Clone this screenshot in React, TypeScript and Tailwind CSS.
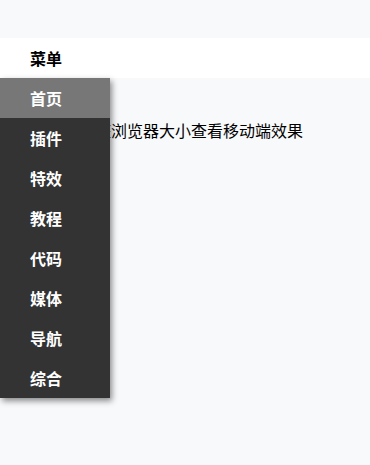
const items = ["首页", "插件", "特效", "教程", "代码", "媒体", "导航", "综合"];

export default function App() {
  return (
    <div
      className="relative min-h-[465px] bg-[#f8f9fb] pt-[38px] text-black"
      style={{ fontFamily: '"Noto Sans CJK SC", "Noto Sans", sans-serif' }}
    >
      {/* top bar */}
      <div className="relative h-10 bg-white">
        <div className="flex h-10 items-center px-[30px] text-base font-bold leading-none">
          菜单
        </div>
        {/* dropdown */}
        <ul className="absolute left-0 top-10 z-10 w-[110px] bg-[#333333] shadow-[2px_3px_6px_rgba(0,0,0,0.45)]">
          {items.map((t, i) => (
            <li
              key={t}
              className={
                i === 0
                  ? "flex h-10 items-center bg-[#777777] px-[30px] text-base font-bold text-white"
                  : "flex h-10 items-center px-[30px] text-base font-bold text-white"
              }
            >
              {t}
            </li>
          ))}
        </ul>
      </div>

      <p className="mt-[42px] px-[31px] text-base leading-5">您可以调整浏览器大小查看移动端效果</p>
    </div>
  );
}
